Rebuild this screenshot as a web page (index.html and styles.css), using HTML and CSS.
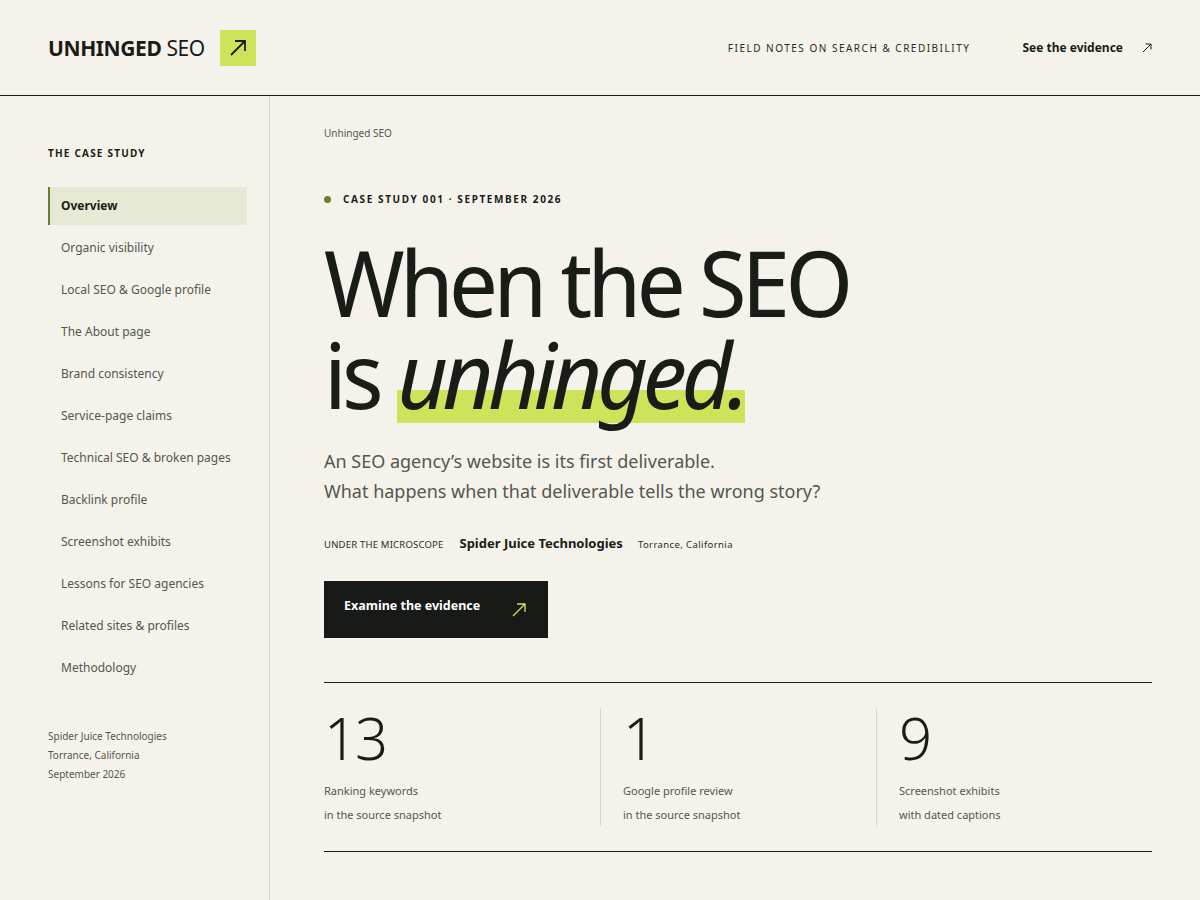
FILE: index.html
```html
<!DOCTYPE html>
<html lang="en">
<head>
<meta charset="utf-8">
<title>Unhinged SEO — Case Study 001</title>
<link rel="stylesheet" href="styles.css">
</head>
<body>
<header class="topbar">
  <div class="brand">
    <span class="brand-name"><b>UNHINGED</b> SEO</span>
    <span class="brand-mark">
      <svg width="18" height="18" viewBox="0 0 18 18"><path d="M2 16L16 2M6 2h10v10" fill="none" stroke="#1a1c18" stroke-width="1.8"/></svg>
    </span>
  </div>
  <nav class="top-right">
    <span class="tagline">FIELD NOTES ON SEARCH &amp; CREDIBILITY</span>
    <a class="top-link">See the evidence</a>
    <svg class="top-arrow" width="10" height="10" viewBox="0 0 10 10"><path d="M1 9L9 1M3.5 1H9v5.5" fill="none" stroke="#1a1c18" stroke-width="1"/></svg>
  </nav>
</header>
<div class="layout">
  <aside class="sidebar">
    <div class="side-title">THE CASE STUDY</div>
    <ul class="side-nav">
      <li class="active">Overview</li>
      <li>Organic visibility</li>
      <li>Local SEO &amp; Google profile</li>
      <li>The About page</li>
      <li>Brand consistency</li>
      <li>Service-page claims</li>
      <li>Technical SEO &amp; broken pages</li>
      <li>Backlink profile</li>
      <li>Screenshot exhibits</li>
      <li>Lessons for SEO agencies</li>
      <li>Related sites &amp; profiles</li>
      <li>Methodology</li>
    </ul>
    <div class="side-foot">
      <div>Spider Juice Technologies</div>
      <div>Torrance, California</div>
      <div>September 2026</div>
    </div>
  </aside>
  <main class="main">
    <div class="crumb">Unhinged SEO</div>
    <div class="eyebrow"><span class="dot"></span>CASE STUDY 001 · SEPTEMBER 2026</div>
    <h1 class="headline">When the SEO<br>is <em><span class="hl">unhinged.</span></em></h1>
    <p class="lede">An SEO agency’s website is its first deliverable.<br>What happens when that deliverable tells the wrong story?</p>
    <div class="meta">
      <span class="meta-label">UNDER THE MICROSCOPE</span>
      <span class="meta-name">Spider Juice Technologies</span>
      <span class="meta-place">Torrance, California</span>
    </div>
    <a class="cta">
      <span>Examine the evidence</span>
      <svg width="14" height="14" viewBox="0 0 14 14"><path d="M1 13L13 1M5 1h8v8" fill="none" stroke="#cfe35a" stroke-width="1.3"/></svg>
    </a>
    <section class="stats">
      <div class="stat">
        <div class="num">13</div>
        <div class="label">Ranking keywords<br>in the source snapshot</div>
      </div>
      <div class="stat">
        <div class="num">1</div>
        <div class="label">Google profile review<br>in the source snapshot</div>
      </div>
      <div class="stat">
        <div class="num">9</div>
        <div class="label">Screenshot exhibits<br>with dated captions</div>
      </div>
    </section>
  </main>
</div>
</body>
</html>
```
FILE: styles.css
```css
* { box-sizing: border-box; }
html, body { margin: 0; padding: 0; }
body {
  background: #f4f2eb;
  color: #1a1c18;
  font-family: "Noto Sans", "Open Sans", sans-serif;
  width: 1200px;
  height: 900px;
  overflow: hidden;
}
.topbar {
  height: 96px;
  border-bottom: 1px solid #1a1c18;
  display: flex;
  align-items: center;
  justify-content: space-between;
  padding: 0 48px;
}
.brand { display: flex; align-items: center; gap: 15px; }
.brand-name { font-size: 21px; letter-spacing: -0.4px; font-weight: 400; }
.brand-name b { font-weight: 700; }
.brand-mark {
  width: 36px; height: 36px; background: #cfe35a;
  display: flex; align-items: center; justify-content: center;
}
.top-right { display: flex; align-items: center; }
.tagline { font-size: 10px; letter-spacing: 1.5px; color: #2a2c28; }
.top-link { font-size: 12px; font-weight: 700; margin-left: 52px; }
.top-arrow { margin-left: 19px; }
.layout { display: flex; height: 804px; }
.sidebar {
  width: 270px;
  flex: none;
  border-right: 1px solid #dad7cc;
  padding: 50px 22px 0 48px;
}
.side-title { font-size: 10px; font-weight: 700; letter-spacing: 1.2px; line-height: 14px; }
.side-nav { list-style: none; margin: 27px 0 0; padding: 0; display: flex; flex-direction: column; gap: 4px; }
.side-nav li {
  height: 38px; line-height: 38px; padding-left: 11px;
  font-size: 12px; color: #55574f;
  border-left: 2px solid transparent;
}
.side-nav li.active {
  background: #e6e9d3; border-left-color: #6a7f2c;
  color: #1a1c18; font-weight: 700;
}
.side-foot { margin-top: 40px; font-size: 10px; line-height: 19px; color: #55574f; }
.main { flex: 1; padding: 30px 48px 0 54px; }
.crumb { font-size: 10px; color: #55574f; line-height: 14px; }
.eyebrow {
  margin-top: 52px; display: flex; align-items: center;
  font-size: 10px; font-weight: 700; letter-spacing: 1.6px; line-height: 14px;
}
.dot { width: 7px; height: 7px; border-radius: 50%; background: #6a7f2c; margin: 0 12px 0 0; }
.headline {
  margin: 30px 0 0; font-family: "Noto Sans Display", "Noto Sans", sans-serif;
  font-weight: 400; font-size: 92px; line-height: 92px;
  letter-spacing: -0.05em;
}
.headline em { font-style: italic; letter-spacing: -0.056em; }
.hl {
  background: linear-gradient(to bottom, transparent 63%, #cfe35a 63%, #cfe35a 90%, transparent 90%);
  padding-right: 1px;
}
.lede { margin: 26px 0 0; font-size: 18px; line-height: 30px; color: #55574f; }
.meta { margin-top: 28px; display: flex; align-items: baseline; }
.meta-label { font-size: 9.5px; letter-spacing: 0.2px; color: #2a2c28; }
.meta-name { font-size: 13px; font-weight: 700; margin-left: 16px; }
.meta-place { font-size: 9.5px; letter-spacing: 0.4px; margin-left: 15px; color: #2a2c28; }
.cta {
  margin-top: 29px; width: 224px; height: 57px; background: #181a17; color: #fff;
  display: flex; align-items: flex-start; justify-content: space-between;
  padding: 16px 22px 0 20px; font-size: 12.5px; font-weight: 700;
}
.cta svg { margin-top: 6px; }
.stats {
  margin-top: 44px; border-top: 1px solid #1a1c18; border-bottom: 1px solid #1a1c18;
  display: grid; grid-template-columns: 1fr 1fr 1fr; padding: 25px 0 24px;
}
.stat { padding-left: 22px; border-left: 1px solid #dad7cc; }
.stat:first-child { padding-left: 0; border-left: none; }
.num { font-size: 58px; font-weight: 300; line-height: 60px; letter-spacing: -2px; }
.label { margin-top: 11px; font-size: 11px; line-height: 24px; color: #55574f; }
```
